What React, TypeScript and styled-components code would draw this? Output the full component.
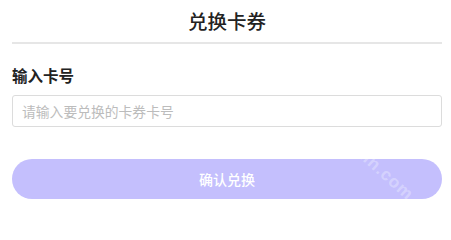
import styled, { createGlobalStyle } from 'styled-components'

const Global = createGlobalStyle`
  html, body {
    margin: 0;
    padding: 0;
    background: #fff;
  }
  body {
    font-family: 'Noto Sans CJK SC', 'Noto Sans', sans-serif;
    color: #222;
  }
`

const Page = styled.div`
  position: relative;
  width: 451px;
  height: 213px;
  box-sizing: border-box;
  padding: 0 9px 0 12px;
  overflow: hidden;
`

const Header = styled.div`
  height: 42px;
  display: flex;
  align-items: center;
  justify-content: center;
  border-bottom: 2px solid #e6e6e6;
`

const Title = styled.h1`
  margin: 0;
  font-size: 19.5px;
  font-weight: 500;
  color: #222;
  line-height: 1;
`

const Label = styled.div`
  margin-top: 20px;
  font-size: 15.5px;
  font-weight: 700;
  color: #222;
  line-height: 22px;
`

const Input = styled.input`
  display: block;
  box-sizing: border-box;
  width: 100%;
  height: 32px;
  margin-top: 9px;
  padding: 0 9px;
  border: 1px solid #dcdcdc;
  border-radius: 3px;
  font-family: inherit;
  font-size: 13.8px;
  color: #333;
  outline: none;
  &::placeholder {
    color: #bcbcbc;
  }
`

const Button = styled.button`
  display: flex;
  align-items: center;
  justify-content: center;
  width: 100%;
  height: 40px;
  margin-top: 32px;
  border: none;
  border-radius: 20px;
  background: #c4bffd;
  color: #fff;
  font-family: inherit;
  font-size: 14px;
  font-weight: 500;
  cursor: pointer;
`

// faint site watermark lying across the button
const Watermark = styled.span`
  position: absolute;
  left: 342px;
  top: 122px;
  transform: rotate(42deg);
  transform-origin: left top;
  font-family: 'Liberation Sans', sans-serif;
  font-size: 17px;
  font-weight: 700;
  letter-spacing: 1px;
  color: rgba(255, 255, 255, 0.3);
  pointer-events: none;
  white-space: nowrap;
`

export default function App() {
  return (
    <Page>
      <Global />
      <Header>
        <Title>兑换卡券</Title>
      </Header>
      <Label>输入卡号</Label>
      <Input placeholder='请输入要兑换的卡券卡号' />
      <Button>确认兑换</Button>
      <Watermark>weixin.com</Watermark>
    </Page>
  )
}
